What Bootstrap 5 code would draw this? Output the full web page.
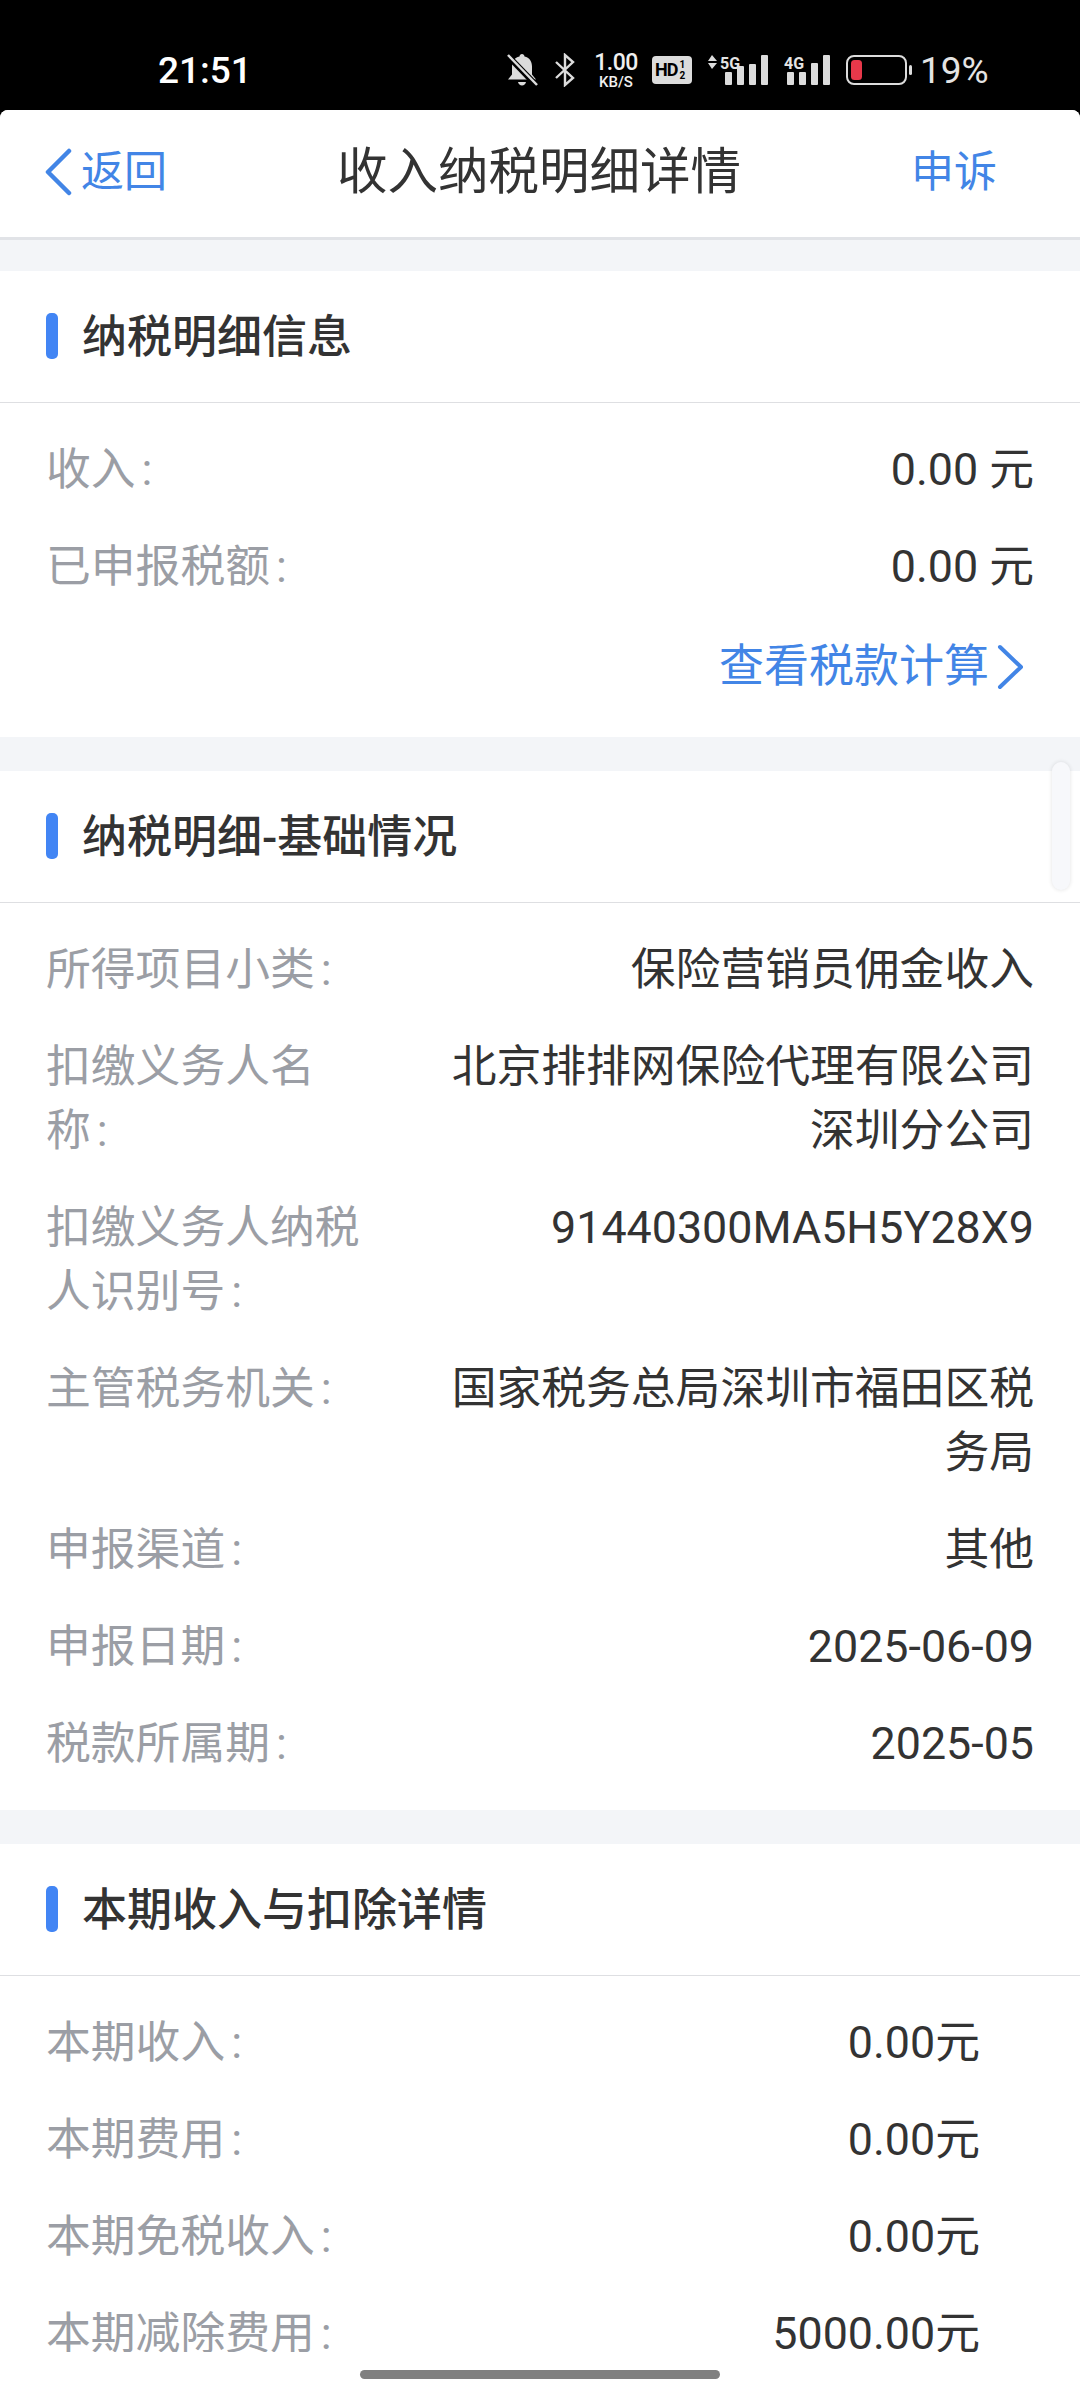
<!DOCTYPE html>
<html lang="zh-CN">
<head>
  <meta charset="UTF-8">
  <title>收入纳税明细详情</title>
  <link href="https://cdn.jsdelivr.net/npm/bootstrap@5.3.0/dist/css/bootstrap.min.css" rel="stylesheet">
  <style>
    html, body { margin: 0; width: 1080px; height: 2400px; overflow: hidden; background: #000; }
    body { font-family: Roboto, "Noto Sans CJK SC", sans-serif; }

    .phone-status { height: 110px; background: #000; color: #e4e4e4; padding: 30px 90px 0 158px; }
    .status-time { width: 348px; font-size: 37px; font-weight: 500; color: #fff; line-height: 1; }
    .net-speed { width: 48px; color: #f0f0f0; font-weight: 500; line-height: 1; text-align: center; }
    .net-speed .speed-num { font-size: 23px; letter-spacing: -.5px; }
    .net-speed .speed-unit { font-size: 15px; margin-top: 1px; }
    .hd-tag { width: 40px; height: 28px; border-radius: 4px; background: #dcdcdc; color: #000; font-weight: 700; padding-left: 3px; }
    .hd-tag .hd-main { font-size: 18px; letter-spacing: -1px; line-height: 1; }
    .hd-tag .hd-frac { font-size: 10px; line-height: 11px; margin-left: 2px; }
    .batt-pct { font-size: 37px; color: #e4e4e4; line-height: 1; }

    .app-shell { height: 2290px; background: #fff; border-radius: 8px 8px 0 0; overflow: hidden; }
    .top-nav { height: 130px; padding: 0 45px 3px 43px; background: #fff; border-bottom: 3px solid #e1e3e7; }
    .top-nav .nav-side { width: 160px; color: #4285e6; font-size: 43px; }
    .top-nav .nav-title { font-size: 50.5px; color: #333; line-height: 1; }
    .top-nav .appeal-link { padding-right: 38px; }
    .scroll-area { height: 2112px; background: #f3f5f8; overflow: hidden; padding-top: 31px; }
    .info-block { background: #fff; margin-bottom: 34px; }
    .block-head { height: 132px; padding-left: 46px; border-bottom: 1px solid #dedfe2; }
    .accent-bar { width: 12px; height: 46px; background: #4285f4; border-radius: 5px; margin-right: 24px; margin-top: -2px; }
    .block-head h2 { font-size: 45px; font-weight: 500; color: #333; margin: 0; line-height: 1; padding-top: 2px; }
    .block-body { padding: 18px 46px 18px 46px; }
    .info-row { padding: 16.5px 0; font-size: 44.8px; line-height: 64px; }
    .info-row dt { width: 320px; flex-shrink: 0; font-weight: 400; color: #9b9ea5; }
    .info-row dt span { margin-left: 6px; }
    .info-row dd { margin: 0 0 0 auto; width: 590px; text-align: right; color: #333; }
    .info-list { margin: 0; }
    .inset-val dd { padding-right: 54px; }
    .calc-link { color: #4285e6; font-size: 45px; line-height: 64px; padding: 20px 10px 20px 0; text-decoration: none; }

    .gesture-strip { height: 48px; background: #fff; }
    .gesture-bar { width: 360px; height: 9px; margin-top: 18px; border-radius: 5px; background: #808080; }
    .fast-scroll { position: absolute; left: 1052px; top: 762px; width: 18px; height: 128px; border-radius: 9px; background: #f7f8fb; box-shadow: 0 0 4px rgba(0,0,0,.12); }
  </style>
</head>
<body>

  <div class="phone-status d-flex align-items-center">
    <div class="status-time">21:51</div>
    <div class="d-flex align-items-center">
      <svg width="32" height="34" viewBox="0 0 32 34" class="me-3"><path d="M16 1c1.400 0 2.400 1 2.500 2.400 5 1.200 7.500 5 7.500 10v8l4 5H2l4-5v-8c0-5 2.500-8.800 7.500-10C13.600 2 14.600 1 16 1z" fill="#dcdcdc"/><path d="M12 29h8c-.5 2.300-2 3.500-4 3.500S12.500 31.300 12 29z" fill="#dcdcdc"/><path d="M2 3l28 29" stroke="#000" stroke-width="6"/><path d="M2 2l29 30" stroke="#dcdcdc" stroke-width="2.500"/></svg>
      <svg width="22" height="34" viewBox="0 0 22 34" class="me-3"><path d="M2 9l17 16-8 7V2l8 7L2 25" fill="none" stroke="#dcdcdc" stroke-width="2.400"/></svg>
      <div class="net-speed me-2">
        <div class="speed-num">1.00</div>
        <div class="speed-unit">KB/S</div>
      </div>
      <div class="hd-tag ms-1 me-3 d-flex align-items-center">
        <span class="hd-main">HD</span>
        <span class="hd-frac text-center">1<br>2</span>
      </div>
      <svg width="60" height="32" viewBox="0 0 60 32" class="me-3">
        <path d="M4 1l5 6H0zM4 15l5-6H0z" fill="#dcdcdc"/>
        <text x="12" y="15" font-family="Roboto" font-size="16" font-weight="700" fill="#e4e4e4">5G</text>
        <rect x="17" y="18" width="7" height="13" rx="1" fill="#dcdcdc"/><rect x="29" y="12" width="7" height="19" rx="1" fill="#dcdcdc"/><rect x="41" y="10" width="7" height="21" rx="1" fill="#dcdcdc"/><rect x="53" y="1" width="7" height="30" rx="1" fill="#dcdcdc"/>
      </svg>
      <svg width="46" height="32" viewBox="0 0 46 32" class="me-3">
        <text x="0" y="15" font-family="Roboto" font-size="16" font-weight="700" fill="#e4e4e4">4G</text>
        <rect x="3" y="18" width="7" height="13" rx="1" fill="#dcdcdc"/><rect x="15" y="18" width="7" height="13" rx="1" fill="#dcdcdc"/><rect x="27" y="9" width="7" height="22" rx="1" fill="#dcdcdc"/><rect x="39" y="1" width="7" height="30" rx="1" fill="#dcdcdc"/>
      </svg>
      <svg width="66" height="30" viewBox="0 0 66 30" class="me-2">
        <rect x="1" y="1" width="59" height="28" rx="7" fill="none" stroke="#dcdcdc" stroke-width="2"/>
        <rect x="5" y="5" width="11" height="20" rx="3.500" fill="#e8384a"/>
        <rect x="63" y="10" width="3" height="10" rx="1.500" fill="#dcdcdc"/>
      </svg>
      <div class="batt-pct">19%</div>
    </div>
  </div>

  <div class="app-shell">
    <div class="top-nav d-flex align-items-center justify-content-between">
      <a class="nav-side d-flex align-items-center text-decoration-none">
        <svg width="30" height="48" viewBox="0 0 30 48" class="me-2"><path d="M26 3L5 24l21 21" fill="none" stroke="#4285e6" stroke-width="4.500" stroke-linecap="round" stroke-linejoin="round"/></svg>
        <span>返回</span>
      </a>
      <div class="nav-title">收入纳税明细详情</div>
      <a class="nav-side appeal-link text-end text-decoration-none">申诉</a>
    </div>

    <div class="scroll-area">
      <section class="info-block">
        <div class="block-head d-flex align-items-center"><span class="accent-bar"></span><h2>纳税明细信息</h2></div>
        <div class="block-body">
          <dl class="info-list">
            <div class="info-row d-flex"><dt>收入<span>:</span></dt><dd>0.00 元</dd></div>
            <div class="info-row d-flex"><dt>已申报税额<span>:</span></dt><dd>0.00 元</dd></div>
          </dl>
          <div class="d-flex justify-content-end">
            <a class="calc-link d-flex align-items-center">查看税款计算
              <svg width="27" height="46" viewBox="0 0 27 46" class="ms-2"><path d="M3 3l21 20L3 43" fill="none" stroke="#4285e6" stroke-width="4" stroke-linecap="round" stroke-linejoin="round"/></svg>
            </a>
          </div>
        </div>
      </section>

      <section class="info-block">
        <div class="block-head d-flex align-items-center"><span class="accent-bar"></span><h2>纳税明细-基础情况</h2></div>
        <div class="block-body">
          <dl class="info-list">
            <div class="info-row d-flex"><dt>所得项目小类<span>:</span></dt><dd>保险营销员佣金收入</dd></div>
            <div class="info-row d-flex"><dt>扣缴义务人名<br>称<span>:</span></dt><dd>北京排排网保险代理有限公司深圳分公司</dd></div>
            <div class="info-row d-flex"><dt>扣缴义务人纳税<br>人识别号<span>:</span></dt><dd>91440300MA5H5Y28X9</dd></div>
            <div class="info-row d-flex"><dt>主管税务机关<span>:</span></dt><dd>国家税务总局深圳市福田区税务局</dd></div>
            <div class="info-row d-flex"><dt>申报渠道<span>:</span></dt><dd>其他</dd></div>
            <div class="info-row d-flex"><dt>申报日期<span>:</span></dt><dd>2025-06-09</dd></div>
            <div class="info-row d-flex"><dt>税款所属期<span>:</span></dt><dd>2025-05</dd></div>
          </dl>
        </div>
      </section>

      <section class="info-block">
        <div class="block-head d-flex align-items-center"><span class="accent-bar"></span><h2>本期收入与扣除详情</h2></div>
        <div class="block-body">
          <dl class="info-list">
            <div class="info-row d-flex inset-val"><dt>本期收入<span>:</span></dt><dd>0.00元</dd></div>
            <div class="info-row d-flex inset-val"><dt>本期费用<span>:</span></dt><dd>0.00元</dd></div>
            <div class="info-row d-flex inset-val"><dt>本期免税收入<span>:</span></dt><dd>0.00元</dd></div>
            <div class="info-row d-flex inset-val"><dt>本期减除费用<span>:</span></dt><dd>5000.00元</dd></div>
          </dl>
        </div>
      </section>
    </div>

    <div class="gesture-strip d-flex justify-content-center"><div class="gesture-bar"></div></div>
  </div>

  <div class="fast-scroll"></div>

<script src="https://cdn.jsdelivr.net/npm/bootstrap@5.3.0/dist/js/bootstrap.bundle.min.js"></script>
</body>
</html>
